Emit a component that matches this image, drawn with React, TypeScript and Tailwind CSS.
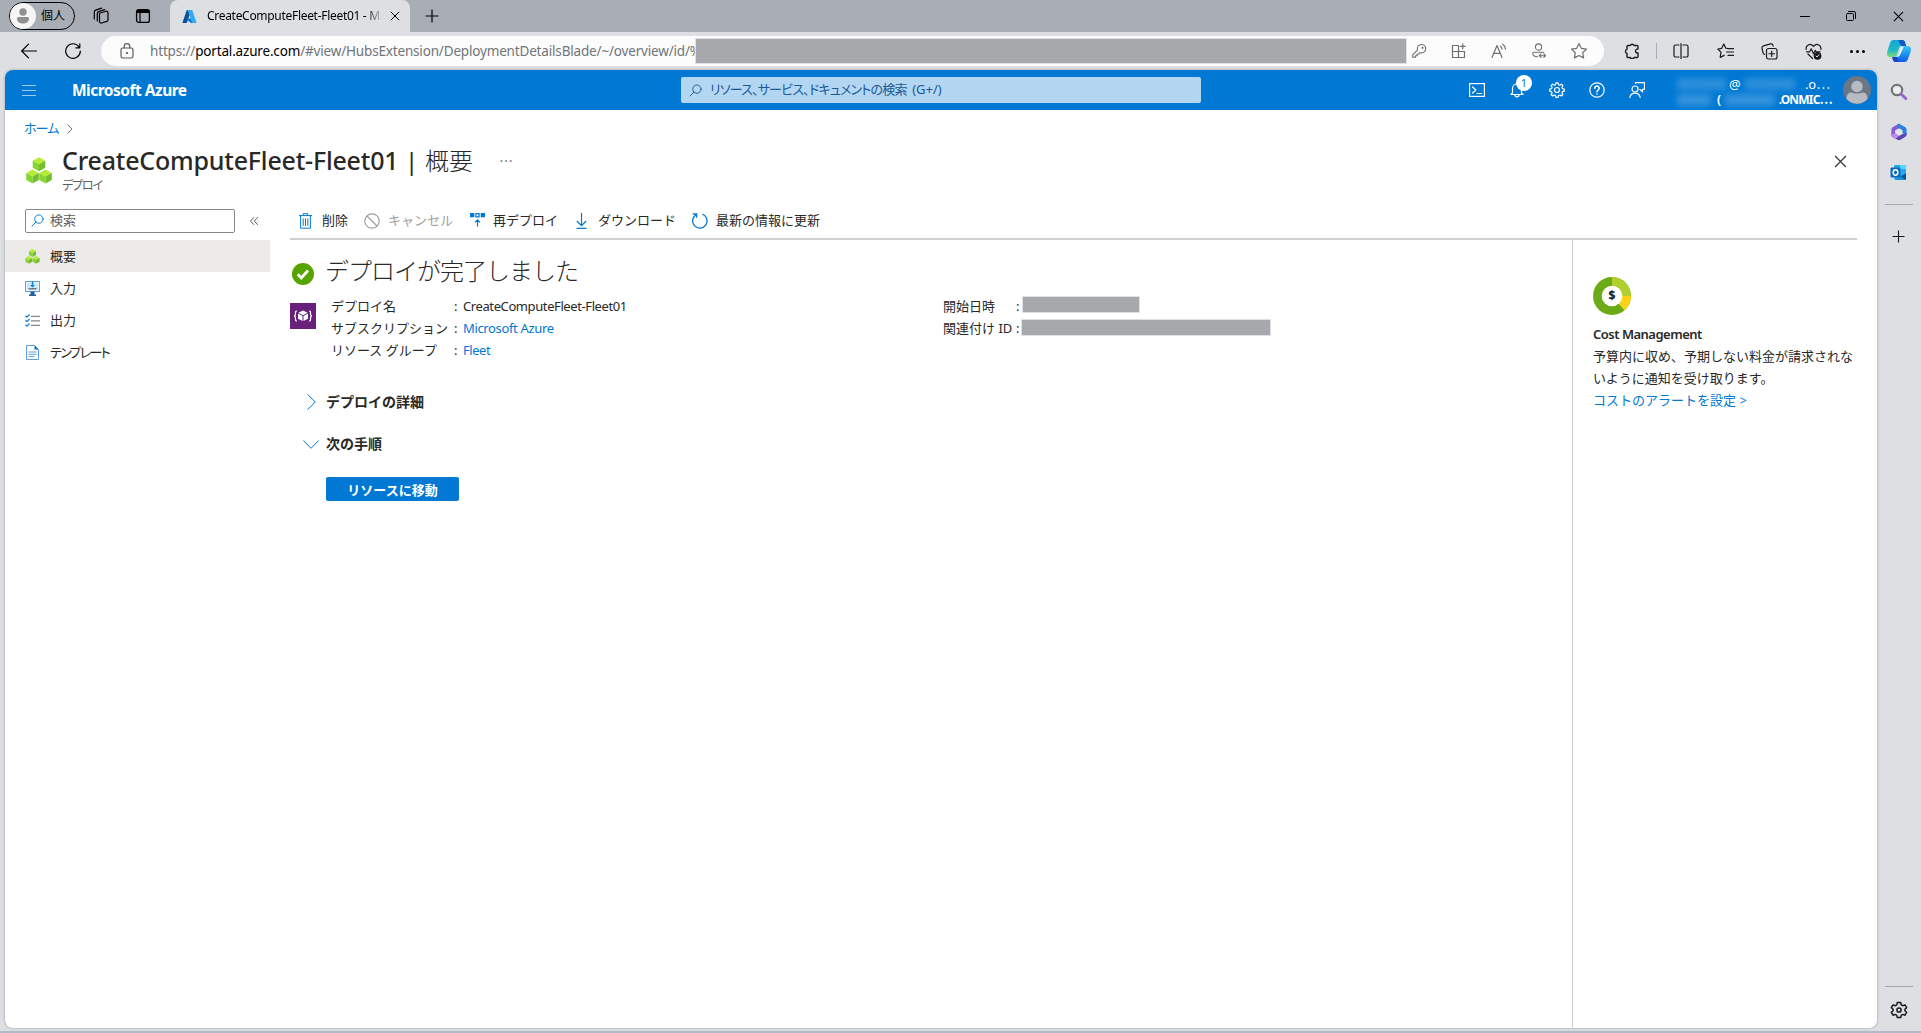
import React from 'react';

interface IconProps {
    className?: string;
}

const stroke = {
    fill: 'none',
    stroke: 'currentColor',
    strokeWidth: 1.2,
    strokeLinecap: 'round' as const,
    strokeLinejoin: 'round' as const,
};

/* Browser icons */
const WorkspacesIcon: React.FC<IconProps> = ({ className }) => (
    <svg viewBox="0 0 18 18" className={className} {...stroke}>
        <path d="M7.5 6.2 14 4.2a1.6 1.6 0 0 1 2 1.5v7.2a1.6 1.6 0 0 1-1.1 1.5L9.5 16a1.6 1.6 0 0 1-2-1.5V6.2Z" />
        <path d="M5.3 14V6.5a2 2 0 0 1 1.3-1.9l6-2" />
        <path d="M2.3 12V5a2 2 0 0 1 1.3-1.9l6-2" />
    </svg>
);

const TabActionsIcon: React.FC<IconProps> = ({ className }) => (
    <svg viewBox="0 0 16 16" className={className}>
        <rect x="1.6" y="1.6" width="12.8" height="12.8" rx="2.2" fill="none" stroke="currentColor" strokeWidth="1.3" />
        <path d="M1.5 5V3.5a2 2 0 0 1 2-2h9a2 2 0 0 1 2 2V5Z" fill="currentColor" />
        <path d="M5 5v9" stroke="currentColor" strokeWidth="1.2" />
    </svg>
);

const AzureLogo: React.FC<IconProps> = ({ className }) => (
    <svg viewBox="0 0 96 96" className={className}>
        <path d="M33.3 6.5h26L32 87a4 4 0 0 1-4 3H8a4 4 0 0 1-4-5.5L29.4 9.2a4 4 0 0 1 3.9-2.7Z" fill="#0f4f97" />
        <path d="M71 60.3H30a2 2 0 0 0-1.3 3.3L55 88a4 4 0 0 0 3 1.5h23Z" fill="#0078d4" />
        <path d="M66.6 9.2a4 4 0 0 0-3.9-2.7H33.6a4 4 0 0 1 3.9 2.7L62.7 84a4 4 0 0 1-3.9 5.5H88a4 4 0 0 0 3.9-5.5Z" fill="#35aaf0" />
    </svg>
);

const CloseIcon: React.FC<IconProps> = ({ className }) => (
    <svg viewBox="0 0 12 12" className={className} stroke="currentColor" strokeWidth="1.2">
        <path d="m1 1 10 10M11 1 1 11" />
    </svg>
);

const PlusIcon: React.FC<IconProps> = ({ className }) => (
    <svg viewBox="0 0 14 14" className={className} stroke="currentColor" strokeWidth="1.2">
        <path d="M7 .5v13M.5 7h13" />
    </svg>
);

const BackIcon: React.FC<IconProps> = ({ className }) => (
    <svg viewBox="0 0 16 16" className={className} {...stroke}>
        <path d="M15.5 8H.7M7.5 1.2.7 8l6.8 6.8" />
    </svg>
);

const RefreshIcon: React.FC<IconProps> = ({ className }) => (
    <svg viewBox="0 0 16 16" className={className} {...stroke}>
        <path d="M15.3 8.2A7.3 7.3 0 1 1 14 3.9M14.8.8v4h-4" />
    </svg>
);

const LockIcon: React.FC<IconProps> = ({ className }) => (
    <svg viewBox="0 0 14 16" className={className} {...stroke}>
        <rect x="1" y="5" width="12" height="10" rx="1.8" />
        <path d="M4.2 5V3.5a2.8 2.8 0 0 1 5.6 0V5" />
        <circle cx="7" cy="10" r=".5" fill="currentColor" />
    </svg>
);

const KeyIcon: React.FC<IconProps> = ({ className }) => (
    <svg viewBox="0 0 16 16" className={className} {...stroke} strokeWidth={1.1}>
        <path d="M10.5 1.5a4.2 4.2 0 1 1-1.5 8.1l-1.6 1.7H6v1.5H4.5v1.5H1.7v-2.5l4.8-4.7a4.2 4.2 0 0 1 4-5.6Z" />
        <circle cx="11.5" cy="4.7" r=".5" fill="currentColor" />
    </svg>
);

const AppsAddIcon: React.FC<IconProps> = ({ className }) => (
    <svg viewBox="0 0 16 16" className={className} {...stroke}>
        <path d="M7.5 2.5h-6v12h12V8.500h-12M7.500 2.500v12M11.800.8v5M9.300 3.300h5" />
    </svg>
);

const ReadAloudIcon: React.FC<IconProps> = ({ className }) => (
    <svg viewBox="0 0 16 16" className={className} {...stroke}>
        <path d="m1 14.500 5-12 5 12M2.800 10.300h6.400M9.500 3.200q1.500 1 1.500 3M11.800 1.200q2.700 1.800 2.700 5" />
    </svg>
);

const PersonSwapIcon: React.FC<IconProps> = ({ className }) => (
    <svg viewBox="0 0 16 18" className={className} {...stroke}>
        <circle cx="7.5" cy="4.5" r="3.5" />
        <path d="M6.5 15.5C3 15.5 1 13.800 1 11.500a1 1 0 0 1 1-1h11.500M8.500 14.300h6.800M10.300 12.300l-2 2 2 2M13.400 12.300l2 2-2 2" />
    </svg>
);

const StarIcon: React.FC<IconProps> = ({ className }) => (
    <svg viewBox="1 1 16 16" className={className} {...stroke}>
        <path d="m9 1.6 2.3 4.7 5.2.8-3.8 3.6.9 5.2L9 13.5l-4.6 2.4.9-5.2-3.800-3.600 5.200-.8Z" />
    </svg>
);

const PuzzleIcon: React.FC<IconProps> = ({ className }) => (
    <svg viewBox="0 0 16 16" className={className} {...stroke} strokeWidth={1.4}>
        <path d="M5 2.5h1.300a2 2 0 0 1 3.700 0h3a1 1 0 0 1 1 1v2.600h-1a2 2 0 0 0 0 3.900h1v3.500a1 1 0 0 1-1 1h-3a2 2 0 0 1-3.700 0H4a1 1 0 0 1-1-1v-3a2.200 2.200 0 0 1 0-4.200V3.500a1 1 0 0 1 1-1Z" />
    </svg>
);

const SplitIcon: React.FC<IconProps> = ({ className }) => (
    <svg viewBox="0 0 16 16" className={className} {...stroke}>
        <path d="M6 14H2.500A1.500 1.500 0 0 1 1 12.500v-9A1.500 1.500 0 0 1 2.500 2H6M10 14h3.500a1.500 1.500 0 0 0 1.500-1.500v-9A1.500 1.500 0 0 0 13.500 2H10M8 .6v15" />
    </svg>
);

const FavoritesIcon: React.FC<IconProps> = ({ className }) => (
    <svg viewBox="0 0 17 16" className={className} {...stroke}>
        <path d="m10.500 5.500-1.700-.3L6.800 1 4.700 5.300.8 6l3.200 3.100-.8 5.300 4-2M11 5.700h5.500M9.500 9h7M11 12.300h5.500" />
    </svg>
);

const CollectionsIcon: React.FC<IconProps> = ({ className }) => (
    <svg viewBox="0 0 17 17" className={className} {...stroke}>
        <rect x="5.5" y="5.5" width="10.5" height="10.5" rx="2" />
        <path d="M10.750 8v5.500M8 10.750h5.500M3.500 11.500a2 2 0 0 1-1.400-1.700L1 5.300a2 2 0 0 1 1.500-2.500l7-1.900a2 2 0 0 1 2.500 1.500l.2.8" />
    </svg>
);

const HealthIcon: React.FC<IconProps> = ({ className }) => (
    <svg viewBox="0 0 17 17" className={className} {...stroke}>
        <path d="M1.200 6.500C.3 2.500 5-.5 8.500 3.300 12-.5 16.700 2.500 15.800 6.500M1.500 8.800h3.200l1.500-3 2.300 5 1.800-3.500.8 1.500h4M3 11l4.500 4.500" />
        <circle cx="12.5" cy="12.8" r="3.9" fill="currentColor" stroke="none" />
        <path d="m11 13 1 1 2-2.300" stroke="#dddfe3" strokeWidth="1" />
    </svg>
);

const CopilotIcon: React.FC<IconProps> = ({ className }) => (
    <svg viewBox="0 0 24 24" className={className}>
        <defs>
            <linearGradient id="cp1" x1="0" y1="0" x2="0" y2="1">
                <stop offset="0" stopColor="#12a5d8" />
                <stop offset=".6" stopColor="#21b9c9" />
                <stop offset="1" stopColor="#7fdc6b" />
            </linearGradient>
            <linearGradient id="cp2" x1="0" y1="0" x2="0" y2="1">
                <stop offset="0" stopColor="#3cc4f5" />
                <stop offset=".6" stopColor="#1888ee" />
                <stop offset="1" stopColor="#1457e6" />
            </linearGradient>
        </defs>
        <path d="M6 1h9a3 3 0 0 1 3 2l1 4h-4a3 3 0 0 0-3 2l-2 7a3 3 0 0 1-3 2H3c-3 0-3.500-3-2.500-6L3 4a4 4 0 0 1 3-3Z" fill="url(#cp1)" />
        <path d="M11 1h4a3 3 0 0 1 3 2l1 4h-4c-2 0-3-6-4-6Z" fill="#1257c4" />
        <path d="M18 23H9a3 3 0 0 1-3-2l-.8-3H8a3 3 0 0 0 3-2l2-7a3 3 0 0 1 3-2h5c3 0 3.500 3 2.500 6L21 20a4 4 0 0 1-3 3Z" fill="url(#cp2)" />
        <path d="M13.800 7.500h3L13.500 15a4 4 0 0 1-3.300 3H8.500a3 3 0 0 0 2.500-2Z" fill="#e8f6fb" />
        <path d="M5.200 18H10l1.500 5H9a3 3 0 0 1-3-2Z" fill="#1b3fd0" />
    </svg>
);

/* Edge sidebar */
const EdgeSearchIcon: React.FC<IconProps> = ({ className }) => (
    <svg viewBox="0 0 18 18" className={className} fill="none">
        <circle cx="7" cy="7" r="5.2" stroke="#767676" strokeWidth="2.2" fill="#eceef0" />
        <path d="m11.500 11.500 4.300 4" stroke="#9a62cf" strokeWidth="3" strokeLinecap="round" />
    </svg>
);

const M365Icon: React.FC<IconProps> = ({ className }) => (
    <svg viewBox="0 0 18 18" className={className}>
        <path d="M9.500.5 3 4a3 3 0 0 0-1.600 2.500v6L5 11V7.500L11 4Z" fill="#8a5ad6" />
        <path d="m9 .7 6 3.300a3 3 0 0 1 1.600 2.500V12L12.500 10V7.300L7.500 4.500 7.200 1.500Z" fill="#2f7fe0" />
        <path d="M16.600 10v1.500a3 3 0 0 1-1.600 2.600l-4.500 2.700a3 3 0 0 1-3 0L2.700 14c-1-.7-1.200-1.500-1.300-2.500L5 10.500l4 2.600 4-2.400Z" fill="#5a45b4" />
        <path d="M1.400 11.500 5 10.500l4 2.600-3.500 2.600L2.700 14Z" fill="#c38bf0" />
        <circle cx="9" cy="8.8" r="2.9" fill="#e4e6ee" />
    </svg>
);

const OutlookIcon: React.FC<IconProps> = ({ className }) => (
    <svg viewBox="0 0 17 17" className={className}>
        <rect x="4" y="1" width="12" height="14" rx="1" fill="#28a8ea" />
        <path d="M10 1h5a1 1 0 0 1 1 1v3h-6Z" fill="#50d9ff" />
        <path d="M4 16h12V9l-6 3.500Z" fill="#1490df" />
        <path d="m11 12.500 5-3V16Z" fill="#0a4f8e" />
        <rect x=".5" y="3.5" width="10" height="10" rx="1" fill="#0f6cbd" />
        <ellipse cx="5.5" cy="8.5" rx="2.3" ry="2.7" fill="none" stroke="#fff" strokeWidth="1.5" />
    </svg>
);

const EdgeGearIcon: React.FC<IconProps> = ({ className }) => (
    <svg viewBox="0 0 18 18" className={className} {...stroke} strokeWidth={1.5}>
        <path d="m7.300 1.500h3.400l.5 2.300 1.500.9 2.300-.8 1.600 2.800L14.900 8.300v1.500l1.700 1.500-1.600 2.900-2.300-.8-1.500.9-.5 2.200H7.300l-.5-2.200-1.500-.9-2.300.8-1.600-2.900 1.700-1.500V8.300L1.400 6.700 3 3.900l2.300.8 1.500-.9Z" />
        <circle cx="9" cy="9" r="2.1" />
    </svg>
);

/* Portal icons */
const SearchIcon: React.FC<IconProps> = ({ className }) => (
    <svg viewBox="0 0 14 14" className={className} {...stroke} strokeWidth={1}>
        <circle cx="8.5" cy="5.5" r="4.5" />
        <path d="M5.300 8.700 1 13" />
    </svg>
);

const ShellIcon: React.FC<IconProps> = ({ className }) => (
    <svg viewBox="0 0 16 14" className={className} {...stroke}>
        <rect x=".6" y=".6" width="14.8" height="12.8" strokeLinejoin="miter" />
        <path d="m3.500 4 3.500 3-3.500 3M8 10.500h4.500" />
    </svg>
);

const BellIcon: React.FC<IconProps> = ({ className }) => (
    <svg viewBox="0 0 16 16" className={className} {...stroke}>
        <path d="M2 12.500h12L12.500 11V6.500a4.500 4.500 0 0 0-9 0V11ZM6 12.800a2 2 0 0 0 4 0" />
    </svg>
);

const GearIcon: React.FC<IconProps> = ({ className }) => (
    <svg viewBox="0 0 16 16" className={className} {...stroke}>
        <path d="M6.900.8h2.200l.4 1.900 1.300.5 1.600-1 1.500 1.500-1 1.600.5 1.300 1.900.4v2.200l-1.900.4-.5 1.300 1 1.600-1.500 1.500-1.600-1-1.300.5-.4 1.900H6.900l-.4-1.900-1.300-.5-1.600 1-1.500-1.500 1-1.600-.5-1.300L.7 9.200V7l1.900-.4.5-1.300-1-1.600 1.500-1.500 1.600 1 1.300-.5Z" />
        <circle cx="8" cy="8" r="2.5" />
    </svg>
);

const HelpIcon: React.FC<IconProps> = ({ className }) => (
    <svg viewBox="0 0 16 16" className={className} {...stroke}>
        <circle cx="8" cy="8" r="7.2" />
        <path d="M5.800 6.200a2.200 2.200 0 1 1 3.300 1.900C8.300 8.600 8 9 8 9.800M8 12v.1" strokeWidth="1.6" />
    </svg>
);

const FeedbackIcon: React.FC<IconProps> = ({ className }) => (
    <svg viewBox="0 0 16 16" className={className} {...stroke}>
        <circle cx="6" cy="7" r="3" />
        <path d="M.8 15.400a5.300 5.300 0 0 1 10.400 0M6.500 1.500V.6h9v6.800h-2v2.400l-2.600-2.400" />
    </svg>
);

const CubesIcon: React.FC<IconProps> = ({ className }) => (
    <svg viewBox="0 0 26 27" className={className}>
        {[[13, 0], [6.5, 12.3], [19.5, 12.3]].map(([x, y]) => (
            <g key={x} transform={`translate(${x} ${y})`}>
                <path d="M0 .2 6.300 3.700 0 7.200l-6.300-3.500Z" fill="#b4ec36" />
                <path d="M-6.300 3.700 0 7.200v7l-6.300-3.400Z" fill="#86d633" />
                <path d="M6.300 3.700 0 7.200v7l6.300-3.400Z" fill="#76bc2d" />
            </g>
        ))}
    </svg>
);

const InputsIcon: React.FC<IconProps> = ({ className }) => (
    <svg viewBox="0 0 15 15" className={className}>
        <rect x=".5" y=".5" width="14" height="10" fill="#fff" stroke="#5ea0e8" />
        <rect x="1.5" y="1.5" width="12" height="8" fill="#cfe8fb" />
        <path d="M6.800 0h1.500v4H10L7.500 6.500 5 4h1.800Z" fill="#0f84d8" />
        <path d="M3.500 7.800h8" stroke="#444" />
        <path d="M5.500 10.500h4v3h1.500V15H4v-1.500h1.500Z" fill="#1f5fa8" />
    </svg>
);

const OutputsIcon: React.FC<IconProps> = ({ className }) => (
    <svg viewBox="0 0 15 13" className={className} fill="none">
        <path d="m.5 1.800 1.400 1.300L4.500.5M.5 6.300l1.400 1.300L4.500 5M.5 10.800l1.400 1.300 2.600-2.600" stroke="#1a7fd0" strokeWidth="1.3" />
        <path d="M6 2.300h9M6 6.800h9M6 11.300h9" stroke="#8a8886" strokeWidth="1.2" />
    </svg>
);

const TemplateIcon: React.FC<IconProps> = ({ className }) => (
    <svg viewBox="0 0 13 15" className={className}>
        <path d="M.5.5h8l4 4v10H.5Z" fill="#fff" stroke="#5ea0e8" />
        <path d="M8.500.3 12.700 4.500H8.500Z" fill="#0f6cbd" />
        <path d="M2.500 7h8M2.500 9.300h8M2.500 11.600h6" stroke="#5ea0e8" />
    </svg>
);

const TrashIcon: React.FC<IconProps> = ({ className }) => (
    <svg viewBox="0 0 13 16" className={className} fill="none" stroke="#0078d4" strokeWidth="1">
        <path d="M0 2.600h13M4.300 2.500V.7h4.400v1.800M1.600 2.600v12.600h9.800V2.600M4.200 5.300v7.500M6.500 5.300v7.500M8.800 5.300v7.500" />
    </svg>
);

const CancelIcon: React.FC<IconProps> = ({ className }) => (
    <svg viewBox="0 0 16 16" className={className} fill="none" stroke="#a19f9d" strokeWidth="1.2">
        <circle cx="8" cy="8" r="7.2" />
        <path d="m3 3 10 10" />
    </svg>
);

const RedeployIcon: React.FC<IconProps> = ({ className }) => (
    <svg viewBox="0 0 15 14" className={className}>
        <path d="M0 0h4.300v4.300H0ZM10.700 0H15v4.300h-4.300Z" fill="#0078d4" />
        <path d="M5.900.6h3.200v3.200H5.900ZM7.500 13.500V7M5 9.300l2.500-2.500L10 9.300" fill="none" stroke="#0078d4" strokeWidth="1.2" />
    </svg>
);

const DownloadIcon: React.FC<IconProps> = ({ className }) => (
    <svg viewBox="0 0 11 16" className={className} fill="none" stroke="#0078d4" strokeWidth="1.2">
        <path d="M5.500 0v12.500M.8 8l4.700 4.700L10.200 8M.5 15.300h10" />
    </svg>
);

const PortalRefreshIcon: React.FC<IconProps> = ({ className }) => (
    <svg viewBox="0 0 16 16" className={className} fill="none" stroke="#0078d4" strokeWidth="1.3">
        <path d="M10.500 1.200a7.200 7.200 0 1 1-6.500.6M.8 1h3.800v3.800" />
    </svg>
);

const TemplateResourceIcon: React.FC<IconProps> = ({ className }) => (
    <svg viewBox="0 0 26 26" className={className}>
        <rect width="26" height="26" fill="#68217a" />
        <path d="M7 8C5.300 8 5.500 9 5.500 10.500S5.300 13 4 13c1.300 0 1.500 1 1.500 2.500S5.300 18 7 18M19 8c1.700 0 1.500 1 1.500 2.500S20.700 13 22 13c-1.300 0-1.500 1-1.500 2.500s.2 2.500-1.500 2.500" fill="none" stroke="#fff" strokeWidth="1.2" />
        <path d="m13 7.500 4.600 2.300L13 12.200 8.400 9.800ZM8 10.600l4.500 2.300v5.200L8 15.700ZM18 10.600l-4.500 2.300v5.200l4.500-2.400Z" fill="#fff" />
    </svg>
);

const CostIcon: React.FC<IconProps> = ({ className }) => (
    <svg viewBox="0 0 38 38" className={className}>
        <circle cx="19" cy="19" r="19" fill="#6bab17" />
        <path d="M19 0a19 19 0 0 1 19 19H19Z" fill="#b0d02f" />
        <path d="M38 19a19 19 0 0 1-6.500 14.300L19 19Z" fill="#fcd116" />
        <circle cx="19" cy="19" r="10.3" fill="#fff" />
        <text x="19" y="23" textAnchor="middle" fontSize="12" fontWeight="800" fill="#1b1b1b">$</text>
    </svg>
);

const Redacted: React.FC<IconProps> = ({ className }) => (
    <div className={`shrink-0 bg-[#a7a8ac] ring-1 ring-[#e1e1e3] ${className}`} />
);

const urlIcons = [KeyIcon, AppsAddIcon, ReadAloudIcon, PersonSwapIcon, StarIcon];

const menuItems = [
    { label: '概要', Icon: CubesIcon, icon: 'w-[15px] h-[15px]', active: true, text: '' },
    { label: '入力', Icon: InputsIcon, icon: 'w-[15px] h-[15px]', active: false, text: '' },
    { label: '出力', Icon: OutputsIcon, icon: 'w-[15px] h-[13px]', active: false, text: '' },
    { label: 'テンプレート', Icon: TemplateIcon, icon: 'w-[13px] h-[15px]', active: false, text: 'palt tracking-[-1.7px]' },
];

const commands = [
    { label: '削除', Icon: TrashIcon, icon: 'w-[13px] h-4', box: 'w-[65px]', gap: 'w-[23px]', text: 'text-[#292827]' },
    { label: 'キャンセル', Icon: CancelIcon, icon: 'w-4 h-4', box: 'w-[106px]', gap: 'w-6', text: 'text-[#a19f9d]' },
    { label: '再デプロイ', Icon: RedeployIcon, icon: 'w-[15px] h-[14px] -mt-0.5', box: 'w-[106px]', gap: 'w-[23px]', text: 'text-[#292827]' },
    { label: 'ダウンロード', Icon: DownloadIcon, icon: 'w-[11px] h-4', box: 'w-[116px]', gap: 'w-[22px]', text: 'text-[#292827]' },
    { label: '最新の情報に更新', Icon: PortalRefreshIcon, icon: 'w-4 h-4', box: 'w-[140px]', gap: 'w-6', text: 'text-[#292827]' },
];

const details = [
    { label: 'デプロイ名', value: 'CreateComputeFleet-Fleet01', text: 'text-[#292827] tracking-[-0.4px]' },
    { label: 'サブスクリプション', value: 'Microsoft Azure', text: 'text-[#0078d4] tracking-[-0.35px]' },
    { label: 'リソース グループ', value: 'Fleet', text: 'text-[#0078d4] tracking-[-0.45px]' },
];

const TabStrip = () => (
    <div className="flex h-8 bg-[#a9adb5] text-black">
        <div className="flex items-center w-[170px] pl-[9px]">
            <div className="flex items-center w-[66px] h-7 rounded-full border border-black">
                <div className="flex items-center justify-center w-[26px] h-[26px] rounded-full bg-[#f6f6f6]">
                    <svg viewBox="0 0 14 16" className="w-3.5 h-4 fill-[#8f8f8f]">
                        <circle cx="7" cy="4" r="3.7" />
                        <path d="M1 10.500a1.500 1.500 0 0 1 1.500-1.500h9a1.500 1.500 0 0 1 1.500 1.500c0 3-2.500 5-6 5s-6-2-6-5Z" />
                    </svg>
                </div>
                <span className="ml-[5px] text-xs">個人</span>
            </div>
            <WorkspacesIcon className="ml-[17px] w-[18px] h-[18px]" />
            <TabActionsIcon className="ml-[25px] w-4 h-4" />
        </div>
        <div className="flex items-center w-60 pl-3 rounded-t-lg bg-[#dddfe3]">
            <AzureLogo className="w-[15px] h-[15px]" />
            <div className="ml-2.5 w-[173px] overflow-hidden whitespace-nowrap text-xs tracking-[-0.3px] bg-linear-to-r from-black from-92% to-[#0003] bg-clip-text text-transparent">
                CreateComputeFleet-Fleet01 - M
            </div>
            <CloseIcon className="ml-2.5 w-[10px] h-[10px]" />
        </div>
        <div className="flex items-center flex-1 pl-[15px]">
            <PlusIcon className="w-3.5 h-3.5" />
            <div className="flex items-center ml-auto">
                <div className="w-[10px] h-px bg-black mr-[36px]" />
                <svg viewBox="0 0 10 10" className="w-[10px] h-[10px] mr-[37px]" {...stroke} strokeWidth={1}>
                    <rect x=".5" y="2.5" width="7" height="7" rx="1" />
                    <path d="M2.500.5H8a1.500 1.500 0 0 1 1.500 1.500v5.500" />
                </svg>
                <CloseIcon className="w-[11px] h-[11px] mr-[17px]" />
            </div>
        </div>
    </div>
);

const AddressBar = () => (
    <div className="flex items-center h-[38px] bg-[#dddfe3]">
        <BackIcon className="ml-[21px] w-4 h-4" />
        <RefreshIcon className="ml-7 w-4 h-4" />
        <div className="flex items-center ml-5 w-[1503px] h-[30px] rounded-full bg-[#fcfcfc]">
            <LockIcon className="ml-[19px] w-3.5 h-4 shrink-0 text-[#5c5c5c]" />
            <div className="ml-4 w-[546px] shrink-0 overflow-hidden whitespace-nowrap text-[13.5px] tracking-[-0.17px] text-[#70757a]">
                https://<span className="text-black">portal.azure.com</span>/#view/HubsExtension/DeploymentDetailsBlade/~/overview/id/%
            </div>
            <Redacted className="w-[710px] h-6" />
            <div className="flex gap-6 ml-[5px] text-[#6e6e6e]">
                {urlIcons.map((Icon, i) => (
                    <Icon key={i} className="w-4 h-4 shrink-0" />
                ))}
            </div>
        </div>
        <div className="flex items-center text-[#1b1b1b]">
            <PuzzleIcon className="ml-[20px] w-4 h-4" />
            <div className="ml-4 mr-4 w-px h-4 bg-[#a9adb5]" />
            <SplitIcon className="w-4 h-4" />
            <FavoritesIcon className="ml-7 w-[17px] h-4" />
            <CollectionsIcon className="ml-[27px] w-[17px] h-[17px]" />
            <HealthIcon className="ml-[27px] w-[17px] h-[17px]" />
            <div className="flex gap-[3px] ml-7">
                <div className="w-[3px] h-[3px] rounded-full bg-black" />
                <div className="w-[3px] h-[3px] rounded-full bg-black" />
                <div className="w-[3px] h-[3px] rounded-full bg-black" />
            </div>
            <CopilotIcon className="ml-[22px] w-6 h-6" />
        </div>
    </div>
);

const PortalHeader = () => (
    <header className="flex items-center h-10 bg-[#0078d4] text-white">
        <div className="flex flex-col gap-1 ml-[17px] w-3.5">
            <div className="h-px bg-[#9dcbef]" />
            <div className="h-px bg-[#9dcbef]" />
            <div className="h-px bg-[#9dcbef]" />
        </div>
        <div className="ml-9 w-[609px] pt-0.5 text-[15.5px] font-bold tracking-[-0.5px]">Microsoft Azure</div>
        <div className="flex items-center w-[520px] h-[26px] pl-2 rounded-xs bg-[#b3d6f2] text-[#1b5a96]">
            <SearchIcon className="w-[13px] h-[13px]" />
            <span className="ml-2 text-[13px] tracking-[-0.8px] palt">
                リソース、サービス、ドキュメントの検索 <span className="ml-[3px] tracking-normal">(G+/)</span>
            </span>
        </div>
        <div className="flex items-center gap-6 ml-[268px]">
            <ShellIcon className="w-4 h-3.5" />
            <div className="relative w-4 h-4">
                <BellIcon className="w-4 h-4" />
                <span className="absolute left-[7px] -top-[7px] w-4 h-4 rounded-full bg-white text-[#0078d4] text-[11px] leading-4 text-center">1</span>
            </div>
            <GearIcon className="w-4 h-4" />
            <HelpIcon className="w-4 h-4" />
            <FeedbackIcon className="w-4 h-4" />
        </div>
        <div className="flex flex-col ml-8 mt-[3px] w-[155px] h-8 text-xs leading-4">
            <div className="flex items-center h-4">
                <div className="w-[49px] h-3 bg-[#4a9fe0] opacity-60 blur-[3px]" />
                <span className="ml-[3px] text-[13px] leading-4">@</span>
                <div className="ml-1 w-[50px] h-3 bg-[#4a9fe0] opacity-60 blur-[3px]" />
                <span className="ml-auto mr-[2px] text-[13px] leading-4">.o⋯</span>
            </div>
            <div className="flex items-center h-4 font-bold">
                <div className="w-[34px] h-3 bg-[#4a9fe0] opacity-70 blur-[3px]" />
                <span className="ml-[6px]">(</span>
                <div className="ml-1 w-[50px] h-3 bg-[#4a9fe0] opacity-70 blur-[3px]" />
                <span className="ml-auto tracking-[-0.8px]">.ONMIC⋯</span>
            </div>
        </div>
        <div className="ml-[11px] w-7 h-7 rounded-full overflow-hidden bg-[#6b7785]">
            <svg viewBox="0 0 28 28" className="w-7 h-7">
                <circle cx="14" cy="10.5" r="5.7" fill="#b8bcc2" />
                <path d="M3.500 23c0-5 2.500-6.500 5-6.500 2 1.300 9 1.300 11 0 2.500 0 5 1.500 5 6.500a14 14 0 0 1-21 0Z" fill="#b8bcc2" />
            </svg>
        </div>
    </header>
);

const BladeTitle = () => (
    <div className="h-[91px]">
        <div className="flex items-center h-9 pl-[19px] text-[13px] text-[#0078d4]">
            <span className="w-[43px] pt-px tracking-[-0.9px] palt">ホーム</span>
            <svg viewBox="0 0 6 10" className="w-1.5 h-2.5 mt-0.5 text-[#767676]" {...stroke} strokeWidth={1}>
                <path d="m.7.7 4.300 4.300-4.300 4.300" />
            </svg>
        </div>
        <div className="flex pl-[21px]">
            <CubesIcon className="mt-[11px] w-[26px] h-[27px]" />
            <div className="ml-2.5 flex-1">
                <div className="flex items-center h-[30px] text-2xl text-[#292827]">
                    <span className="w-[343px] text-[25px] font-medium tracking-[-0.2px] whitespace-nowrap">CreateComputeFleet-Fleet01</span>
                    <span className="w-5 shrink-0">|</span>
                    <span className="font-light">概要</span>
                    <span className="ml-[26px] text-sm text-[#605e5c]">⋯</span>
                </div>
                <div className="mt-0.5 text-xs leading-[15px] text-[#605e5c] tracking-[-1.2px] palt">デプロイ</div>
            </div>
            <CloseIcon className="mt-[9px] mr-[30px] w-[13px] h-[13px] text-[#3b3a39]" />
        </div>
    </div>
);

const SideMenu = () => (
    <nav className="w-[265px]">
        <div className="flex items-center h-[39px] pl-5">
            <div className="flex items-center w-[210px] h-6 pl-[5px] rounded-xs border border-[#8a8886] text-[13px] text-[#605e5c]">
                <SearchIcon className="w-[13px] h-[13px] text-[#0078d4]" />
                <span className="ml-1.5">検索</span>
            </div>
            <svg viewBox="0 0 8 8" className="ml-[15px] w-2 h-2 text-[#605e5c]" {...stroke} strokeWidth={1}>
                <path d="M3.700.5.5 4l3.200 3.500M7.500.5 4.300 4l3.200 3.500" />
            </svg>
        </div>
        {menuItems.map(({ label, Icon, icon, active, text }) => (
            <a key={label} href="#" className={`flex items-center h-8 pl-5 pt-px text-[13px] text-[#292827] ${active ? 'bg-[#edebe9]' : ''}`}>
                <span className="flex items-center justify-center w-[15px]">
                    <Icon className={icon} />
                </span>
                <span className={`ml-2.5 ${text}`}>{label}</span>
            </a>
        ))}
    </nav>
);

const CommandBar = () => (
    <div className="flex items-center h-[39px] ml-5 mr-5 pl-[9px] border-b-2 border-[#cfcfcf] text-[13px]">
        {commands.map(({ label, Icon, icon, box, gap, text }) => (
            <button key={label} className={`flex items-center h-[37px] pt-0.5 whitespace-nowrap ${box} ${text}`}>
                <span className={`flex items-center shrink-0 ${gap}`}>
                    <Icon className={icon} />
                </span>
                {label}
            </button>
        ))}
    </div>
);

const Overview = () => (
    <div className="w-[1283px] border-r border-[#d2d0ce]">
        <div className="flex items-center h-[63px] pl-[2px]">
            <svg viewBox="0 0 22 22" className="mt-[5px] w-[22px] h-[22px]">
                <circle cx="11" cy="11" r="11" fill="#57a300" />
                <path d="m5.800 11.300 3.500 3.700 6.700-7.500" fill="none" stroke="#fff" strokeWidth="2.8" />
            </svg>
            <h2 className="ml-[11px] -mt-0.5 text-2xl font-light tracking-[-1px] text-[#292827]">デプロイが完了しました</h2>
        </div>
        <div className="flex h-[66px] text-[13px] leading-[22px] text-[#292827] -mt-[8px]">
            <TemplateResourceIcon className="mt-2 w-[26px] h-[26px]" />
            <div className="ml-[15px] w-[612px]">
                {details.map(({ label, value, text }) => (
                    <div key={label} className="flex">
                        <span className="w-[123px] whitespace-nowrap">{label}</span>
                        <span className="w-[9px]">:</span>
                        <span className={text}>{value}</span>
                    </div>
                ))}
            </div>
            <div>
                <div className="flex h-[22px]">
                    <span className="w-[73px]">開始日時</span>
                    <span className="w-[7px]">:</span>
                    <Redacted className="mt-[2px] w-[116px] h-[15px]" />
                </div>
                <div className="flex h-[22px]">
                    <span className="w-[73px] whitespace-nowrap">関連付け ID</span>
                    <span className="w-[6px]">:</span>
                    <Redacted className="mt-[3px] w-[248px] h-[15px]" />
                </div>
            </div>
        </div>
        <div className="flex items-center h-[42px] mt-5 pl-[13px] text-sm font-semibold text-[#292827]">
            <span className="flex justify-center w-4">
                <svg viewBox="0 0 9 16" className="w-[9px] h-4 text-[#0078d4]" {...stroke} strokeWidth={1}>
                    <path d="m.7.5 7.600 7.500-7.600 7.500" />
                </svg>
            </span>
            <span className="ml-[7px]">デプロイの詳細</span>
        </div>
        <div className="flex items-center h-[42px] pl-[13px] text-sm font-semibold text-[#292827]">
            <svg viewBox="0 0 16 9" className="w-4 h-[9px] text-[#0078d4]" {...stroke} strokeWidth={1}>
                <path d="m.5.7 7.500 7.600 7.500-7.600" />
            </svg>
            <span className="ml-[7px]">次の手順</span>
        </div>
        <button className="mt-3 ml-9 w-[133px] h-6 pt-0.5 rounded-xs bg-[#0078d4] text-white text-[13px] leading-[22px] font-semibold">リソースに移動</button>
    </div>
);

const CostPanel = () => (
    <aside className="flex-1 pl-5 pt-[37px] text-[13px] leading-[22px] text-[#292827]">
        <CostIcon className="w-[38px] h-[38px]" />
        <div className="mt-2 font-semibold tracking-[-0.5px]">Cost Management</div>
        <p className="whitespace-nowrap">
            予算内に収め、予期しない料金が請求されな<br />いように通知を受け取ります。
        </p>
        <a href="#" className="text-[#0078d4] whitespace-nowrap">コストのアラートを設定 &gt;</a>
    </aside>
);

const EdgeSidebar = () => (
    <aside className="flex flex-col items-center w-11 pt-[13px] pr-px">
        <EdgeSearchIcon className="w-[18px] h-[18px]" />
        <M365Icon className="mt-[22px] w-[18px] h-[18px]" />
        <OutlookIcon className="mt-[23px] w-[17px] h-[17px]" />
        <div className="mt-[23px] w-7 h-px bg-[#a3a6aa]" />
        <PlusIcon className="mt-[25px] w-[13px] h-[13px] text-[#1b1b1b]" />
        <div className="mt-auto w-7 h-px bg-[#a3a6aa]" />
        <EdgeGearIcon className="mt-[14px] mb-[12px] w-[18px] h-[18px] text-[#1b1b1b]" />
    </aside>
);

const App: React.FC = () => {
    return (
        <div className="w-[1921px] h-[1033px] flex flex-col overflow-hidden border-b-2 border-[#b1bac4] bg-[#dddfe3] font-['Noto_Sans','Noto_Sans_CJK_JP',sans-serif]">
            <style>{`.palt { font-feature-settings: 'palt'; }`}</style>
            <TabStrip />
            <AddressBar />
            <div className="flex flex-1 min-h-0">
                <div className="flex flex-col w-[1872px] h-[958px] ml-[5px] rounded-lg overflow-hidden bg-white shadow-[0_0_3px_rgba(0,0,0,0.3)]">
                    <PortalHeader />
                    <BladeTitle />
                    <div className="flex flex-1 min-h-0">
                        <SideMenu />
                        <main className="flex flex-col flex-1">
                            <CommandBar />
                            <div className="flex flex-1 ml-5">
                                <Overview />
                                <CostPanel />
                            </div>
                        </main>
                    </div>
                </div>
                <EdgeSidebar />
            </div>
        </div>
    );
};

export default App;
